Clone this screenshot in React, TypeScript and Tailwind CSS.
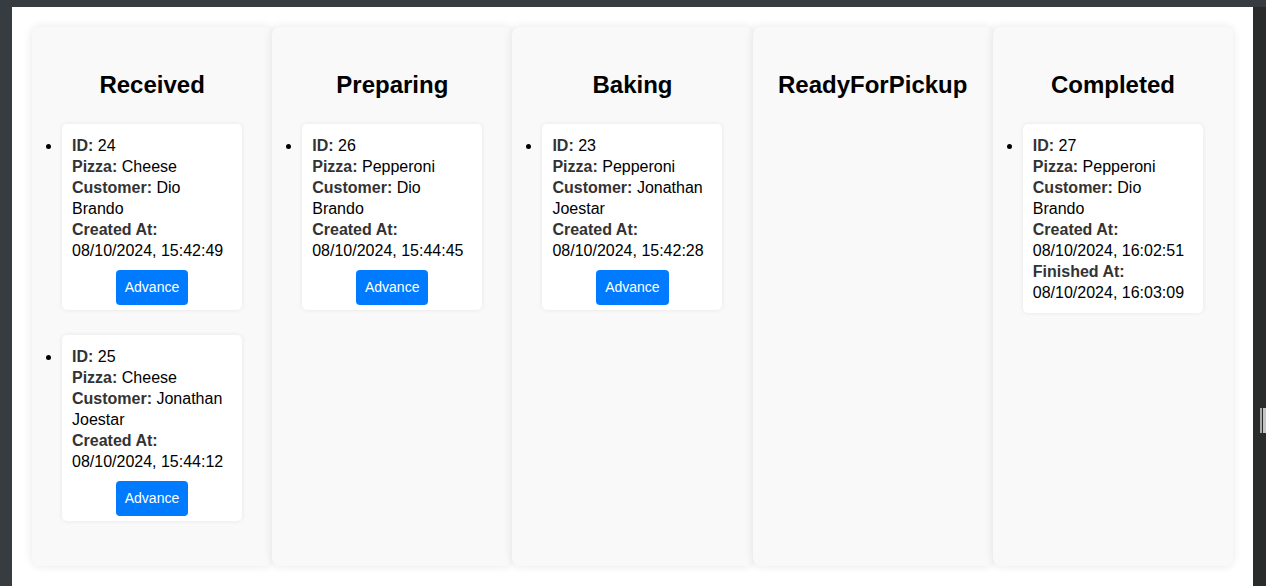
type Order = {
  id: number;
  pizza: string;
  customer: string;
  createdAt: string;
  finishedAt?: string;
};

const columns: { title: string; orders: Order[]; canAdvance: boolean }[] = [
  {
    title: "Received",
    canAdvance: true,
    orders: [
      { id: 24, pizza: "Cheese", customer: "Dio Brando", createdAt: "08/10/2024, 15:42:49" },
      { id: 25, pizza: "Cheese", customer: "Jonathan Joestar", createdAt: "08/10/2024, 15:44:12" },
    ],
  },
  {
    title: "Preparing",
    canAdvance: true,
    orders: [{ id: 26, pizza: "Pepperoni", customer: "Dio Brando", createdAt: "08/10/2024, 15:44:45" }],
  },
  {
    title: "Baking",
    canAdvance: true,
    orders: [{ id: 23, pizza: "Pepperoni", customer: "Jonathan Joestar", createdAt: "08/10/2024, 15:42:28" }],
  },
  { title: "ReadyForPickup", canAdvance: true, orders: [] },
  {
    title: "Completed",
    canAdvance: false,
    orders: [
      {
        id: 27,
        pizza: "Pepperoni",
        customer: "Dio Brando",
        createdAt: "08/10/2024, 16:02:51",
        finishedAt: "08/10/2024, 16:03:09",
      },
    ],
  },
];

export default function App() {
  return (
    <div className="flex h-[586px] flex-col overflow-hidden bg-[#363c3f] font-['Liberation_Sans',Arial,sans-serif]">
      <div className="h-[7px] shrink-0" />
      <div className="flex min-h-0 flex-1">
        <div className="w-[12px] shrink-0" />
        {/* board */}
        <div className="flex flex-1 items-start bg-white px-[20px] pt-[20px]">
          {columns.map((c) => (
            <Column key={c.title} {...c} />
          ))}
        </div>
        {/* side strip */}
        <div className="flex w-[13px] shrink-0 items-start bg-[#2a2c2b] pl-[7px] pt-[401px]">
          <div className="flex h-[25px] gap-[1px]">
            <span className="w-[2px] bg-[#a9a9a9]" />
            <span className="w-[3px] bg-[#c4c4c4]" />
          </div>
        </div>
      </div>
    </div>
  );
}

function Column({ title, orders, canAdvance }: { title: string; orders: Order[]; canAdvance: boolean }) {
  return (
    <div className="flex-1 self-stretch pb-[20px]">
      <div className="h-[539px] rounded-lg bg-[#f9f9f9] pt-[44px] shadow-[0_0_10px_rgba(0,0,0,0.1)]">
        <h2 className="mb-[25px] text-center text-[24px] font-bold leading-[28px] text-black">{title}</h2>
        <ul className="list-disc pl-[30px] text-[16px] leading-[21px] text-[#333] marker:text-black">
          {orders.map((o) => (
            <li key={o.id} className="mb-[25px]">
              <div className="w-[180px] rounded-[5px] bg-white px-[10px] pb-[10px] pt-[11px] shadow-[0_0_5px_rgba(0,0,0,0.08)]">
                <p>
                  <strong>ID:</strong> <span className="text-black">{o.id}</span>
                </p>
                <p>
                  <strong>Pizza:</strong> <span className="text-black">{o.pizza}</span>
                </p>
                <p>
                  <strong>Customer:</strong> <span className="text-black">{o.customer}</span>
                </p>
                <p>
                  <strong>Created At:</strong> <span className="text-black">{o.createdAt}</span>
                </p>
                {o.finishedAt && (
                  <p>
                    <strong>Finished At:</strong> <span className="text-black">{o.finishedAt}</span>
                  </p>
                )}
                {canAdvance && (
                  <div className="-mb-[5px] mt-[9px] flex justify-center">
                    <button className="h-[35px] rounded-[4px] bg-[#007bff] px-[9px] text-[14px] text-white">
                      Advance
                    </button>
                  </div>
                )}
              </div>
            </li>
          ))}
        </ul>
      </div>
    </div>
  );
}
